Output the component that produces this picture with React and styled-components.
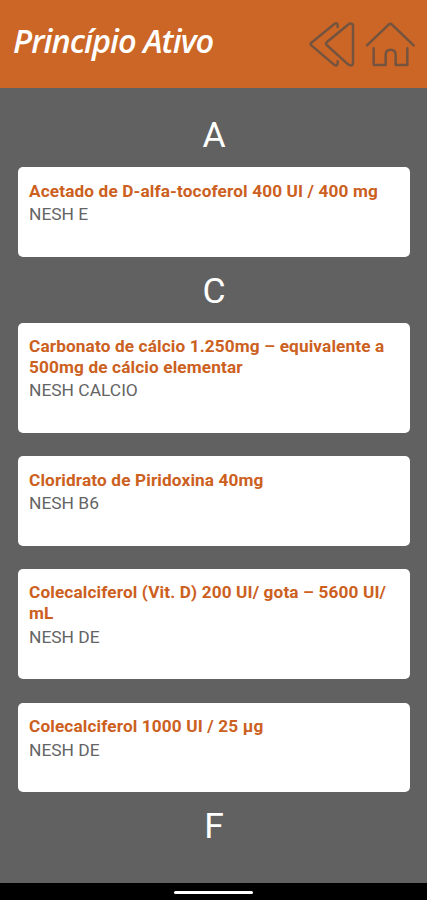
import React from 'react';
import styled, { createGlobalStyle } from 'styled-components';

const GlobalStyle = createGlobalStyle`
    *, *::before, *::after {
        box-sizing: border-box;
    }
    body {
        margin: 0;
        background-color: #616161;
        font-family: Roboto, sans-serif;
    }
`;

const Screen = styled.div`
    display: flex;
    flex-direction: column;
    height: 900px;
    overflow: hidden;
    background-color: #616161;
`;
const Header = styled.header`
    flex: none;
    display: flex;
    justify-content: space-between;
    height: 88px;
    padding: 20px 11px 0 13px;
    background-color: #cc6626;
`;
const Heading = styled.h1`
    margin: 0;
    font-family: "Open Sans", sans-serif;
    font-size: 32.5px;
    font-weight: 600;
    font-style: italic;
    line-height: 42px;
    letter-spacing: -0.95px;
    white-space: nowrap;
    color: #fff;
`;
const Actions = styled.nav`
    display: flex;
    gap: 10px;
`;
const IconButton = styled.button`
    display: flex;
    width: ${({width}) => width}px;
    height: 48px;
    padding: 0;
    border: none;
    background: none;
    color: #74533f;
`;
const Icon = styled.svg`
    width: 100%;
    height: 100%;
    fill: none;
    stroke: currentColor;
    stroke-width: 7.5;
    stroke-linecap: round;
    stroke-linejoin: round;
`;
const List = styled.main`
    flex: 1;
    min-height: 0;
    overflow: hidden;
    padding: 13px 17px 0 18px;
`;
const Letter = styled.h2`
    margin: 0;
    height: 66px;
    font-size: 35.5px;
    font-weight: 400;
    line-height: 69px;
    text-align: center;
    color: #fff;
`;
const Group = styled.div`
    display: flex;
    flex-direction: column;
    gap: 23.4px;
`;
const Card = styled.article`
    padding: 13.5px 11px 31.3px;
    border-radius: 5px;
    background-color: #fff;
`;
const Name = styled.h3`
    margin: 0;
    font-size: 17.2px;
    font-weight: 700;
    line-height: 20.7px;
    letter-spacing: 0.14px;
    color: #cc6021;
`;
const Product = styled.p`
    margin: 3px 0 0;
    font-size: 17.4px;
    line-height: 21px;
    color: #646464;
`;
const GestureBar = styled.footer`
    flex: none;
    display: flex;
    justify-content: center;
    height: 17px;
    padding-top: 8px;
    background-color: #000;
`;
const Handle = styled.div`
    width: 79px;
    height: 3px;
    border-radius: 2px;
    background-color: #fff;
`;

const sections = [
    {
        letter: 'A',
        items: [
            {name: 'Acetado de D-alfa-tocoferol 400 UI / 400 mg', product: 'NESH E'},
        ],
    },
    {
        letter: 'C',
        items: [
            {name: 'Carbonato de cálcio 1.250mg – equivalente a 500mg de cálcio elementar', product: 'NESH CALCIO'},
            {name: 'Cloridrato de Piridoxina 40mg', product: 'NESH B6'},
            {name: 'Colecalciferol (Vit. D) 200 UI/ gota – 5600 UI/ mL', product: 'NESH DE'},
            {name: 'Colecalciferol 1000 UI / 25 µg', product: 'NESH DE'},
        ],
    },
    {
        letter: 'F',
        items: [],
    },
];

const BackIcon = () => (
    <Icon viewBox="32 30 141 144">
        <path d="M121 51V47Q121 36 111 42L42 98Q38 102 42 106L110 164Q121 171 121 160V154"/>
        <path d="M88 97L152 44Q158 40 163 41Q167 42 167 47V159Q167 165 162 166Q157 167 152 163L88 105Q84 101 88 97Z"/>
    </Icon>
);

const HomeIcon = () => (
    <Icon viewBox="204 30 153 144">
        <path d="M210 106L275 44Q280 39 285 44L350 106"/>
        <path d="M230 115V165H266V134Q266 119 281 119Q296 119 296 134V165H331V115"/>
    </Icon>
);

export default function App() {
    return (
        <>
            <GlobalStyle/>
            <Screen>
                <Header>
                    <Heading>Princípio Ativo</Heading>
                    <Actions>
                        <IconButton width={47}>
                            <BackIcon/>
                        </IconButton>
                        <IconButton width={51}>
                            <HomeIcon/>
                        </IconButton>
                    </Actions>
                </Header>
                <List>
                    {sections.map(({letter, items}) => (
                        <section key={letter}>
                            <Letter>{letter}</Letter>
                            <Group>
                                {items.map(item => (
                                    <Card key={item.name}>
                                        <Name>{item.name}</Name>
                                        <Product>{item.product}</Product>
                                    </Card>
                                ))}
                            </Group>
                        </section>
                    ))}
                </List>
                <GestureBar>
                    <Handle/>
                </GestureBar>
            </Screen>
        </>
    );
}
